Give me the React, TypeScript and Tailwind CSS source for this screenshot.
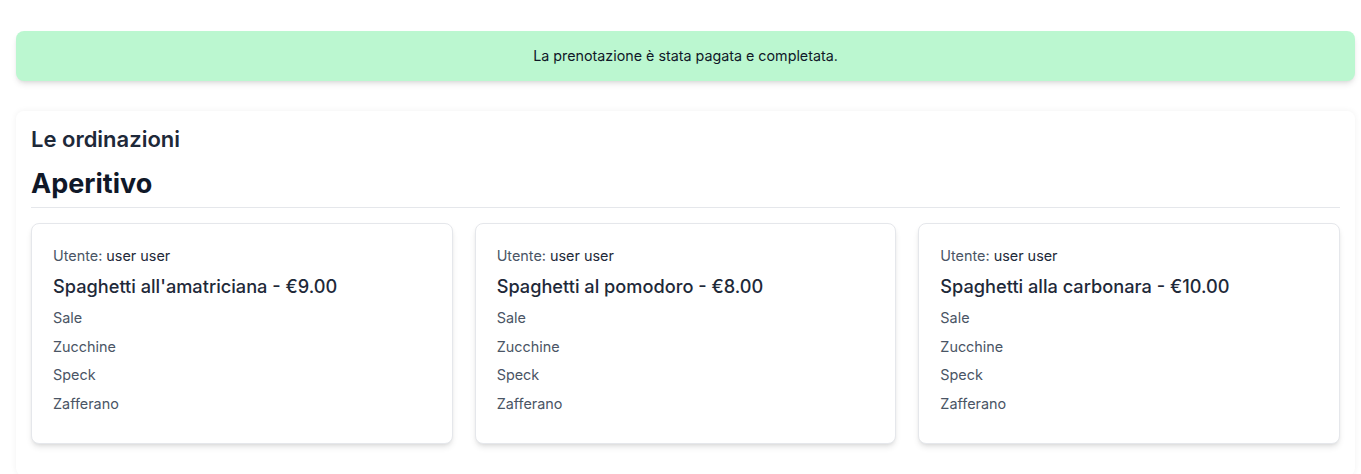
import React from "react";

const orders = [
  { name: "Spaghetti all'amatriciana", price: "€9.00" },
  { name: "Spaghetti al pomodoro", price: "€8.00" },
  { name: "Spaghetti alla carbonara", price: "€10.00" },
];
const ingredients = ["Sale", "Zucchine", "Speck", "Zafferano"];

export default function App() {
  return (
    <div className="min-h-screen bg-white pl-4 pr-[6px] pt-[31px] font-['Inter',sans-serif]">
      <div className="rounded-lg bg-[#bbf7d0] py-[15px] text-center text-[14.3px] leading-5 text-gray-900 shadow-md">
        La prenotazione è stata pagata e completata.
      </div>
      <div className="mt-[30px] rounded-lg bg-white px-[15px] pt-[14px] pb-8 shadow-[0_0_6px_rgba(0,0,0,0.06)]">
        <h2 className="text-[22px] font-semibold leading-7 text-gray-800">Le ordinazioni</h2>
        <h3 className="mt-[13px] text-[27px] font-bold leading-9 text-gray-900">Aperitivo</h3>
        <div className="mt-[5px] border-t border-gray-200" />
        <div className="mt-[15px] grid grid-cols-3 gap-[22px]">
          {orders.map((o) => (
            <div key={o.name} className="rounded-lg border border-gray-200 bg-white px-[21px] pt-[22px] pb-[29px] shadow-md">
              <p className="text-[14.4px] leading-5 text-gray-600">
                Utente: <span className="text-gray-800">user user</span>
              </p>
              <p className="mt-[6px] text-[18.2px] leading-7 font-medium text-gray-800">
                {o.name} - {o.price}
              </p>
              <ul className="mt-[8px] flex flex-col gap-[8.7px] text-[14.4px] leading-5 text-gray-600">
                {ingredients.map((i) => (
                  <li key={i}>{i}</li>
                ))}
              </ul>
            </div>
          ))}
        </div>
      </div>
    </div>
  );
}
